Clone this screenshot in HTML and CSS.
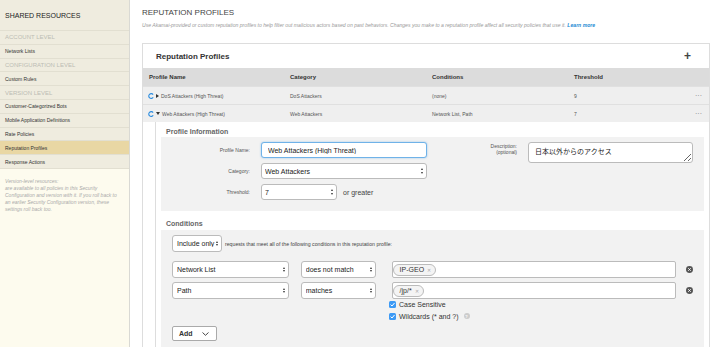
FILE: index.html
```html
<!DOCTYPE html>
<html lang="en">
<head>
  <meta charset="UTF-8">
  <meta name="viewport" content="width=device-width, initial-scale=1.0">
  <title>Reputation Profiles</title>
  <link rel="stylesheet" href="styles.css">
</head>
<body>
  <aside class="sidebar">
    <div class="side-title">SHARED RESOURCES</div>
    <ul class="side-nav">
      <li class="level">ACCOUNT LEVEL</li>
      <li>Network Lists</li>
      <li class="level">CONFIGURATION LEVEL</li>
      <li>Custom Rules</li>
      <li class="level">VERSION LEVEL</li>
      <li>Customer-Categorized Bots</li>
      <li>Mobile Application Definitions</li>
      <li>Rate Policies</li>
      <li class="active">Reputation Profiles</li>
      <li>Response Actions</li>
    </ul>
    <p class="side-note">Version-level resources:<br>are available to all policies in this Security<br>Configuration and version with it. If you roll back to<br>an earlier Security Configuration version, these<br>settings roll back too.</p>
  </aside>

  <main class="content">
    <h1>REPUTATION PROFILES</h1>
    <p class="intro">Use Akamai-provided or custom reputation profiles to help filter out malicious actors based on past behaviors. Changes you make to a reputation profile affect all security policies that use it. <a href="#">Learn more</a></p>

    <section class="panel">
      <div class="panel-head">
        <h2>Reputation Profiles</h2>
        <span class="add-btn">+</span>
      </div>

      <div class="grid-row grid-head">
        <div>Profile Name</div>
        <div>Category</div>
        <div>Conditions</div>
        <div>Threshold</div>
        <div></div>
      </div>

      <div class="grid-row">
        <div class="name">
          <svg class="spin" width="6" height="6" viewBox="0 0 6 6"><path d="M5.1 1.6 A2.4 2.4 0 1 0 5.2 4.3" fill="none" stroke="#2a8ce0" stroke-width="1.1"/></svg>
          <svg width="3" height="4" viewBox="0 0 3 4"><polygon points="0,0 3,2 0,4" fill="#333"/></svg>
          DoS Attackers (High Threat)
        </div>
        <div>DoS Attackers</div>
        <div>(none)</div>
        <div>9</div>
        <div class="more">···</div>
      </div>

      <div class="grid-row">
        <div class="name">
          <svg class="spin" width="6" height="6" viewBox="0 0 6 6"><path d="M5.1 1.6 A2.4 2.4 0 1 0 5.2 4.3" fill="none" stroke="#2a8ce0" stroke-width="1.1"/></svg>
          <svg width="4" height="3" viewBox="0 0 4 3"><polygon points="0,0 4,0 2,3" fill="#333"/></svg>
          Web Attackers (High Threat)
        </div>
        <div>Web Attackers</div>
        <div>Network List, Path</div>
        <div>7</div>
        <div class="more">···</div>
      </div>

      <div class="detail">
        <h3>Profile Information</h3>
        <div class="info-box">
          <label class="lbl">Profile Name:</label>
          <input class="text-input focused" type="text" value="Web Attackers (High Threat)">

          <label class="lbl desc-lbl">Description:<br>(optional)</label>
          <textarea class="desc">日本以外からのアクセス</textarea>

          <label class="lbl">Category:</label>
          <div class="select"><select><option>Web Attackers</option></select></div>

          <label class="lbl">Threshold:</label>
          <div class="threshold">
            <div class="select small"><select><option>7</option></select></div>
            <span>or greater</span>
          </div>
        </div>

        <h3 class="cond-title">Conditions</h3>
        <div class="cond-box">
          <div class="include">
            <div class="select include-sel"><select><option>Include only</option></select></div>
            <span>requests that meet all of the following conditions in this reputation profile:</span>
          </div>

          <div class="cond-row first">
            <div class="select field"><select><option>Network List</option></select></div>
            <div class="select op"><select><option>does not match</option></select></div>
            <div class="tags"><span class="tag">IP-GEO <span class="x">✕</span></span></div>
            <svg class="remove" width="7" height="7" viewBox="0 0 7 7"><circle cx="3.5" cy="3.5" r="3.5" fill="#555"/><path d="M2.2 2.2 L4.8 4.8 M4.8 2.2 L2.2 4.8" stroke="#fff" stroke-width="0.9"/></svg>
          </div>

          <div class="cond-row">
            <div class="select field"><select><option>Path</option></select></div>
            <div class="select op"><select><option>matches</option></select></div>
            <div class="tags"><span class="tag">/jp/* <span class="x">✕</span></span></div>
            <svg class="remove" width="7" height="7" viewBox="0 0 7 7"><circle cx="3.5" cy="3.5" r="3.5" fill="#555"/><path d="M2.2 2.2 L4.8 4.8 M4.8 2.2 L2.2 4.8" stroke="#fff" stroke-width="0.9"/></svg>
          </div>

          <div class="checks">
            <div class="check">
              <svg width="7" height="7" viewBox="0 0 7 7"><rect width="7" height="7" rx="1.5" fill="#3d9af5"/><path d="M1.6 3.6 L3 5 L5.5 2" fill="none" stroke="#fff" stroke-width="1"/></svg>
              Case Sensitive
            </div>
            <div class="check">
              <svg width="7" height="7" viewBox="0 0 7 7"><rect width="7" height="7" rx="1.5" fill="#3d9af5"/><path d="M1.6 3.6 L3 5 L5.5 2" fill="none" stroke="#fff" stroke-width="1"/></svg>
              Wildcards (* and ?)
              <span class="help">?</span>
            </div>
          </div>

          <button class="add">Add
            <svg width="7" height="4" viewBox="0 0 7 4"><polyline points="0.5,0.5 3.5,3.3 6.5,0.5" fill="none" stroke="#333" stroke-width="0.9"/></svg>
          </button>
        </div>
      </div>
    </section>
  </main>
</body>
</html>
```

FILE: styles.css
```css
* {
  box-sizing: border-box;
}
html, body {
  margin: 0;
  padding: 0;
}
body {
  font-family: "Liberation Sans", Arial, sans-serif;
  color: #333;
  background-color: #fff;
  display: flex;
  height: 347px;
  overflow: hidden;
}

/* sidebar */
.sidebar {
  width: 130px;
  flex: none;
  background-color: #fdfbee;
  border-right: 1px solid #d9d9d4;
}
.side-title {
  height: 31px;
  padding: 0 5px;
  display: flex;
  align-items: center;
  font-size: 7px;
  color: #222;
  background-color: #efecdf;
  border-bottom: 1px solid #e2dfd1;
}
.side-nav {
  list-style: none;
  margin: 0;
  padding: 0;
}
.side-nav li {
  height: 13.8px;
  padding: 0 5px;
  display: flex;
  align-items: center;
  font-size: 5px;
  color: #333;
  background-color: #efecdf;
  border-bottom: 1px solid #e2dfd1;
}
.side-nav li.level {
  font-size: 6px;
  color: #bcbcb4;
}
.side-nav li.active {
  background-color: #e9d7a4;
}
.side-note {
  margin: 0;
  padding: 9px 5px;
  font-size: 5px;
  line-height: 7px;
  font-style: italic;
  color: #aaa;
  white-space: nowrap;
}

/* main area */
.content {
  flex: 1;
  min-width: 0;
  padding: 8px 10px 0 12px;
}
h1 {
  margin: 0;
  font-size: 8px;
  line-height: 10px;
  font-weight: normal;
  color: #444;
}
.intro {
  margin: 4px 0 15px;
  font-size: 5.1px;
  line-height: 6px;
  font-style: italic;
  color: #999;
  white-space: nowrap;
}
.intro a {
  color: #1b8ad3;
  font-weight: bold;
  text-decoration: none;
}

.panel {
  border: 1px solid #ddd;
  background-color: #fff;
}
.panel-head {
  height: 24px;
  display: flex;
  align-items: center;
  justify-content: space-between;
  padding: 0 18px 0 13px;
}
.panel-head h2 {
  margin: 0;
  font-size: 8px;
  color: #333;
}
.add-btn {
  font-size: 12px;
  font-weight: bold;
  color: #444;
  line-height: 1;
}

.grid-row {
  display: grid;
  grid-template-columns: 141px 142px 142px 1fr 14px;
  align-items: center;
  height: 18px;
  padding-left: 6px;
  font-size: 5px;
  color: #555;
  background-color: #efefef;
  border-top: 1px solid #e0e0e0;
}
.grid-head {
  font-size: 6px;
  font-weight: bold;
  color: #333;
  background-color: #dcdcdc;
  border-top: 0;
}
.name {
  display: flex;
  align-items: center;
  gap: 2px;
  margin-left: -1px;
}
.more {
  font-size: 7px;
  color: #777;
}

/* expanded row */
.detail {
  margin-left: 12px;
  border-left: 1px solid #ddd;
  padding: 4px 5px 30px;
}
.detail h3 {
  margin: 0;
  padding-left: 5px;
  font-size: 7px;
  line-height: 11px;
  color: #666;
}
.detail h3.cond-title {
  margin-top: 7px;
  line-height: 12px;
}
.info-box {
  background-color: #f2f2f2;
  padding: 5px 0 11px;
  display: grid;
  grid-template-columns: 89px 166px 79px 165px;
  grid-template-rows: 16px 16px 16px;
  column-gap: 11px;
  row-gap: 5px;
}
.lbl {
  font-size: 5px;
  color: #555;
  text-align: right;
  align-self: center;
}
.desc-lbl {
  grid-column: 3;
  grid-row: 1 / span 2;
  align-self: start;
  padding-top: 1px;
  line-height: 6px;
}
.text-input {
  width: 100%;
  height: 16px;
  border: 1px solid #bbb;
  border-radius: 3px;
  padding: 0 6px;
  font-family: "Liberation Sans", Arial, sans-serif;
  font-size: 7px;
  color: #222;
  outline: none;
}
.text-input.focused {
  border-color: #6fb2e8;
  box-shadow: 0 0 2px rgba(80, 160, 230, 0.6);
}
.desc {
  grid-column: 4;
  grid-row: 1 / span 2;
  height: 21px;
  border: 1px solid #bbb;
  border-radius: 3px;
  padding: 4px 6px;
  font-family: "Liberation Sans", "Noto Sans CJK JP", sans-serif;
  font-size: 7px;
  line-height: 9px;
  color: #222;
  resize: both;
}

.select {
  position: relative;
}
.select select {
  display: block;
  appearance: none;
  -webkit-appearance: none;
  width: 100%;
  height: 16px;
  border: 1px solid #bbb;
  border-radius: 3px;
  background-color: #fff;
  padding: 0 3px;
  font-family: "Liberation Sans", Arial, sans-serif;
  font-size: 7px;
  color: #222;
}
.select::before,
.select::after {
  content: "";
  position: absolute;
  right: 4px;
  border-left: 1.5px solid transparent;
  border-right: 1.5px solid transparent;
}
.select::before {
  top: calc(50% - 2.6px);
  border-bottom: 2px solid #333;
}
.select::after {
  top: calc(50% + 0.6px);
  border-top: 2px solid #333;
}
.threshold {
  display: flex;
  align-items: center;
  gap: 6px;
  font-size: 7px;
  color: #444;
}
.select.small {
  width: 76px;
}

/* conditions */
.cond-box {
  background-color: #f2f2f2;
  padding: 5px 11px 30px;
}
.include {
  display: flex;
  align-items: center;
  gap: 3px;
  font-size: 5.2px;
  color: #444;
}
.select.include-sel {
  width: 50px;
}
.select.include-sel select {
  height: 17px;
  padding: 0 4px;
}
.cond-row {
  display: flex;
  align-items: center;
  margin-top: 4px;
}
.cond-row.first {
  margin-top: 9px;
}
.cond-row .select select {
  height: 17px;
  padding: 0 4px;
}
.select.field {
  width: 117px;
  margin-right: 12px;
}
.select.op {
  width: 75px;
  margin-right: 16px;
}
.tags {
  width: 285px;
  height: 17px;
  display: flex;
  align-items: center;
  border: 1px solid #bbb;
  border-radius: 2px;
  background-color: #fff;
}
.tag {
  display: inline-flex;
  align-items: center;
  gap: 3px;
  height: 12px;
  padding: 0 4px 0 6px;
  border: 1px solid #bbb;
  border-radius: 6px;
  background-color: #f4f4f4;
  font-size: 7px;
  color: #333;
}
.tag .x {
  font-size: 5px;
  color: #aaa;
}
.remove {
  margin-left: 10px;
}
.checks {
  margin-left: 217px;
}
.check {
  display: flex;
  align-items: center;
  gap: 3px;
  height: 10px;
  font-size: 7px;
  color: #333;
}
.check + .check {
  margin-top: 2px;
}
.help {
  display: inline-flex;
  align-items: center;
  justify-content: center;
  width: 6px;
  height: 6px;
  margin-left: 2px;
  border-radius: 50%;
  background-color: #ccc;
  color: #fff;
  font-size: 4px;
  font-weight: bold;
}
.add {
  margin-top: 5px;
  width: 45px;
  height: 15px;
  display: flex;
  align-items: center;
  gap: 9px;
  padding: 0 0 0 6px;
  border: 1px solid #aaa;
  border-radius: 2px;
  background-color: #fff;
  font-family: "Liberation Sans", Arial, sans-serif;
  font-size: 7px;
  font-weight: bold;
  color: #333;
}
```
